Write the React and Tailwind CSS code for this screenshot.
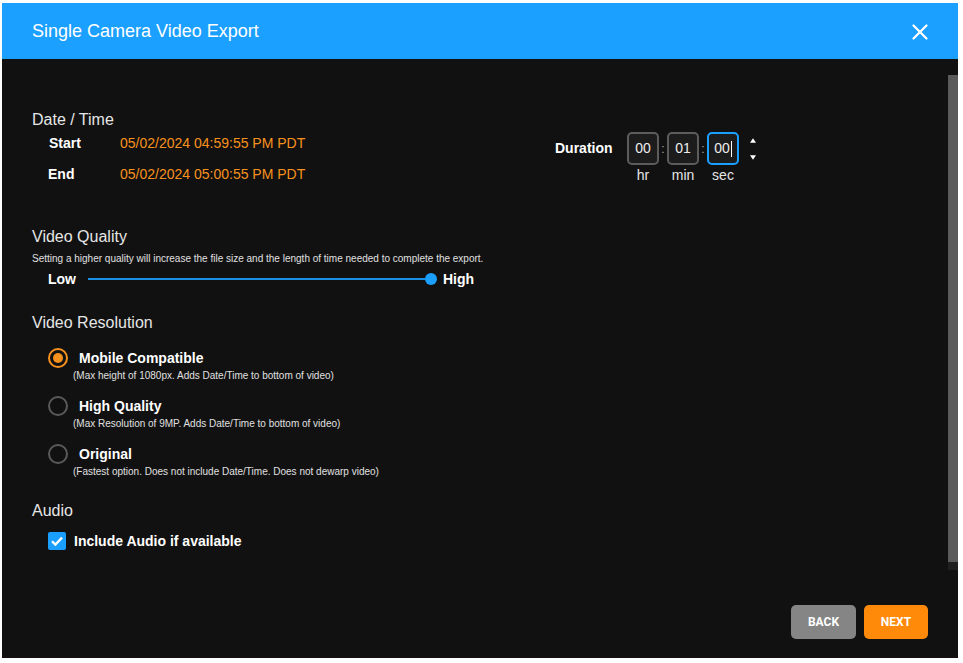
import React from 'react';

const font = { fontFamily: '"Liberation Sans", Arial, sans-serif' };

function Radio({ checked }) {
    return (
        <div className={`w-[20px] h-[20px] rounded-full border-2 flex items-center justify-center shrink-0 ${checked ? 'border-[#f7911e]' : 'border-[#5a5a5a]'}`}>
            {checked && <div className="w-[10px] h-[10px] rounded-full bg-[#f7911e]"></div>}
        </div>
    );
}

function TimeBox({ value, label, active }) {
    return (
        <div className="flex flex-col items-center">
            <div className={`w-[32px] h-[33px] rounded-[5px] border-2 bg-[#1c1c1c] flex items-center justify-center text-[14px] text-[#eeeeee] ${active ? 'border-[#1a9ffe]' : 'border-[#5c5c5c]'}`}>
                <span>{value}</span>
                {active && <span className="w-px h-[16px] bg-white ml-px"></span>}
            </div>
            <div className="text-[14px] leading-[20px] text-[#e6e6e6]">{label}</div>
        </div>
    );
}

function Option({ checked, title, note }) {
    return (
        <div>
            <div className="flex items-center h-[20px] pl-[16px]">
                <Radio checked={checked} />
                <span className="ml-[11px] text-[14px] font-bold text-white">{title}</span>
            </div>
            <div className="pl-[41px] mt-px text-[10px] leading-[14px] text-[#e0e0e0]">{note}</div>
        </div>
    );
}

export default function App() {
    return (
        <div className="w-[963px] h-[663px] bg-white pt-[3px] pl-[2px]" style={font}>
            <div className="w-[956px] h-[655px] flex flex-col bg-[#111111]">

                {/* Header */}
                <div className="h-[56px] bg-[#1ba0ff] flex items-center justify-between pl-[30px] pr-[30px] shrink-0">
                    <h1 className="text-[18px] text-white">Single Camera Video Export</h1>
                    <svg width="16" height="16" viewBox="0 0 16 16" className="mt-px">
                        <path d="M1.5 1.5 L14.5 14.5 M14.5 1.5 L1.5 14.5" stroke="white" strokeWidth="2.2" strokeLinecap="round" />
                    </svg>
                </div>

                {/* Scroll area */}
                <div className="flex h-[511px] shrink-0">
                    <div className="flex-1 pl-[30px] pt-[51px]">

                        {/* Date / Time + Duration */}
                        <div className="flex">
                            <div className="w-[523px]">
                                <div className="text-[16px] leading-[20px] text-[#e6e6e6]">Date / Time</div>
                                <div className="mt-[3px] flex flex-col gap-[11px] text-[14px] leading-[20px]">
                                    <div className="flex pl-[17px]">
                                        <span className="w-[71px] font-bold text-white">Start</span>
                                        <span className="text-[#f7911e]">05/02/2024 04:59:55 PM PDT</span>
                                    </div>
                                    <div className="flex pl-[16px]">
                                        <span className="w-[72px] font-bold text-white">End</span>
                                        <span className="text-[#f7911e]">05/02/2024 05:00:55 PM PDT</span>
                                    </div>
                                </div>
                            </div>
                            <div className="pt-[22px] flex items-start">
                                <span className="h-[33px] flex items-center text-[14px] font-bold text-white w-[72px]">Duration</span>
                                <TimeBox value="00" label="hr" />
                                <span className="h-[33px] w-[8px] flex items-center justify-center text-[12px] text-[#aaaaaa]">:</span>
                                <TimeBox value="01" label="min" />
                                <span className="h-[33px] w-[8px] flex items-center justify-center text-[12px] text-[#aaaaaa]">:</span>
                                <TimeBox value="00" label="sec" active />
                                <div className="ml-[11px] h-[33px] flex flex-col justify-center gap-[12px] pt-[1px]">
                                    <svg width="6" height="5" viewBox="0 0 6 5"><path d="M3 0.3 L6 4.7 L0 4.7 Z" fill="white" /></svg>
                                    <svg width="6" height="5" viewBox="0 0 6 5"><path d="M0 0.3 L6 0.3 L3 4.7 Z" fill="white" /></svg>
                                </div>
                            </div>
                        </div>

                        {/* Video Quality */}
                        <div className="mt-[42px] text-[16px] leading-[20px] text-[#e6e6e6]">Video Quality</div>
                        <div className="mt-[5px] text-[10px] leading-[14px] text-[#e0e0e0]">Setting a higher quality will increase the file size and the length of time needed to complete the export.</div>
                        <div className="mt-[3px] flex items-center h-[20px] pl-[16px] text-[14px] font-bold text-white">
                            <span className="w-[40px]">Low</span>
                            <div className="relative w-[343px] h-[2px] bg-[#1a8fe6]">
                                <div className="absolute right-[-6px] top-[-5px] w-[12px] h-[12px] rounded-full bg-[#1a9ffe]"></div>
                            </div>
                            <span className="ml-[12px]">High</span>
                        </div>

                        {/* Video Resolution */}
                        <div className="mt-[24px] text-[16px] leading-[20px] text-[#e6e6e6]">Video Resolution</div>
                        <div className="mt-[15px] flex flex-col gap-[13px]">
                            <Option checked title="Mobile Compatible" note="(Max height of 1080px. Adds Date/Time to bottom of video)" />
                            <Option title="High Quality" note="(Max Resolution of 9MP. Adds Date/Time to bottom of video)" />
                            <Option title="Original" note="(Fastest option. Does not include Date/Time. Does not dewarp video)" />
                        </div>

                        {/* Audio */}
                        <div className="mt-[22px] text-[16px] leading-[20px] text-[#e6e6e6]">Audio</div>
                        <div className="mt-[10px] flex items-center h-[20px] pl-[16px]">
                            <div className="w-[18px] h-[18px] rounded-[2px] bg-[#1a9ffe] flex items-center justify-center">
                                <svg width="14" height="14" viewBox="0 0 14 14">
                                    <path d="M2 7.2 L5.4 10.6 L12 3.6" stroke="white" strokeWidth="2.3" fill="none" />
                                </svg>
                            </div>
                            <span className="ml-[8px] text-[14px] font-bold text-white">Include Audio if available</span>
                        </div>
                    </div>

                    {/* Scrollbar */}
                    <div className="w-[10px] pt-[16px] flex flex-col">
                        <div className="h-[487px] bg-[#5a5a5a]"></div>
                        <div className="h-[8px] bg-[#1f1f1f]"></div>
                    </div>
                </div>

                {/* Footer */}
                <div className="flex-1 flex justify-end items-start pt-[35px] pr-[30px] gap-[8px]" style={{ fontFamily: 'Roboto, "Liberation Sans", sans-serif' }}>
                    <button className="w-[65px] h-[34px] rounded-[5px] bg-[#858585] text-white text-[12px] font-bold">BACK</button>
                    <button className="w-[64px] h-[34px] rounded-[5px] bg-[#ff8a0a] text-white text-[12px] font-bold">NEXT</button>
                </div>
            </div>
        </div>
    );
}
